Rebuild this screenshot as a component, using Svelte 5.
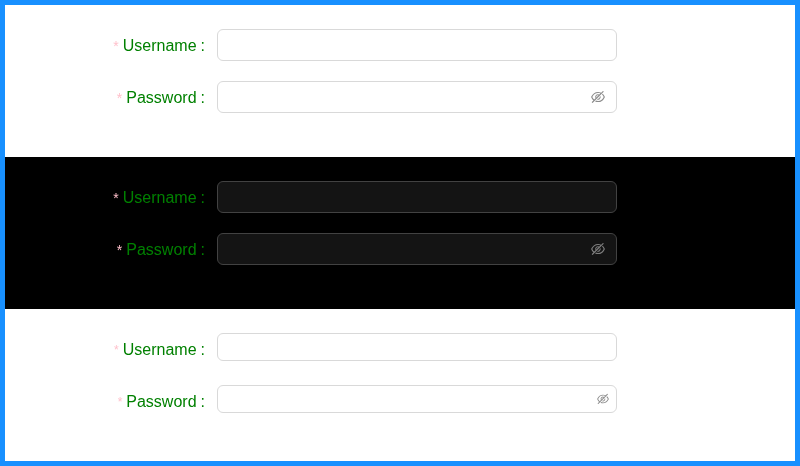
<script>
  const forms = [
    { theme: 'light', fields: ['Username', 'Password'] },
    { theme: 'dark', fields: ['Username', 'Password'] },
    { theme: 'light compact', fields: ['Username', 'Password'] }
  ];
</script>

<main>
  {#each forms as form}
    <form class={form.theme} autocomplete="off">
      {#each form.fields as field}
        <div class="item">
          <div class="label"><span class="mark">*</span><span>{field}</span><span class="colon">:</span></div>
          <div class="control">
            {#if field === 'Password'}
              <svg viewBox="64 64 896 896" fill="currentColor" aria-hidden="true">
                <path d="M942.2 486.2Q889.47 375.11 816.7 305l-50.88 50.88C807.31 395.53 843.45 447.4 874.7 512 791.5 684.2 673.4 766 512 766q-72.67 0-133.87-22.38L323 798.75Q408 838 512 838q288.3 0 430.2-300.3a60.29 60.29 0 000-51.5zm-63.57-320.64L836 122.88a8 8 0 00-11.32 0L715.31 232.2Q624.86 186 512 186q-288.3 0-430.2 300.3a60.3 60.3 0 000 51.5q56.69 119.4 136.5 191.41L112.48 835a8 8 0 000 11.31L155.17 889a8 8 0 0011.31 0l712.15-712.12a8 8 0 000-11.32zM149.3 512C232.6 339.8 350.7 258 512 258c54.54 0 104.13 9.36 149.12 28.39l-70.3 70.3a176 176 0 00-238.13 238.13l-83.42 83.42C223.1 637.49 183.3 582.28 149.3 512zm246.7 0a112.11 112.11 0 01146.2-106.69L401.31 546.2A112 112 0 01396 512z" />
                <path d="M508 624c-3.46 0-6.87-.16-10.25-.47l-52.82 52.82a176.09 176.09 0 00227.42-227.42l-52.82 52.82c.31 3.38.47 6.79.47 10.25a111.94 111.94 0 01-112 112z" />
              </svg>
            {/if}
          </div>
        </div>
      {/each}
    </form>
  {/each}
</main>

<style>
  :global(body) { margin: 0; }
  main {
    box-sizing: border-box;
    width: 800px;
    height: 466px;
    border: 5px solid #1890ff;
    font-family: 'Liberation Sans', Arial, sans-serif;
  }
  form {
    box-sizing: border-box;
    height: 152px;
    padding-top: 24px;
    --line: #d9d9d9;
    --field: #fff;
    --icon: rgba(0, 0, 0, 0.45);
    background: #fff;
  }
  .dark {
    --line: #424242;
    --field: #141414;
    --icon: rgba(255, 255, 255, 0.45);
    background: #000;
  }
  .item { display: flex; height: 32px; margin-bottom: 20px; }
  .label {
    box-sizing: border-box;
    display: flex;
    justify-content: flex-end;
    align-items: center;
    width: 200px;
    height: 32px;
    margin-right: 12px;
    padding-top: 2px;
    color: green;
    font-size: 16px;
    white-space: nowrap;
    will-change: opacity;
  }
  .mark { margin-right: 4px; color: pink; font-size: 14px; }
  .colon { margin-left: 4px; }
  .control {
    box-sizing: border-box;
    display: flex;
    align-items: center;
    justify-content: flex-end;
    width: 400px;
    height: 32px;
    padding-right: 11px;
    border: 1px solid var(--line);
    border-radius: 6px;
    color: var(--icon);
    background: var(--field);
  }
  svg { width: 14px; height: 14px; }
  .compact .mark { font-size: 12px; }
  .compact .control { height: 28px; padding-right: 7px; }
  .compact svg { width: 12px; height: 12px; }
</style>
